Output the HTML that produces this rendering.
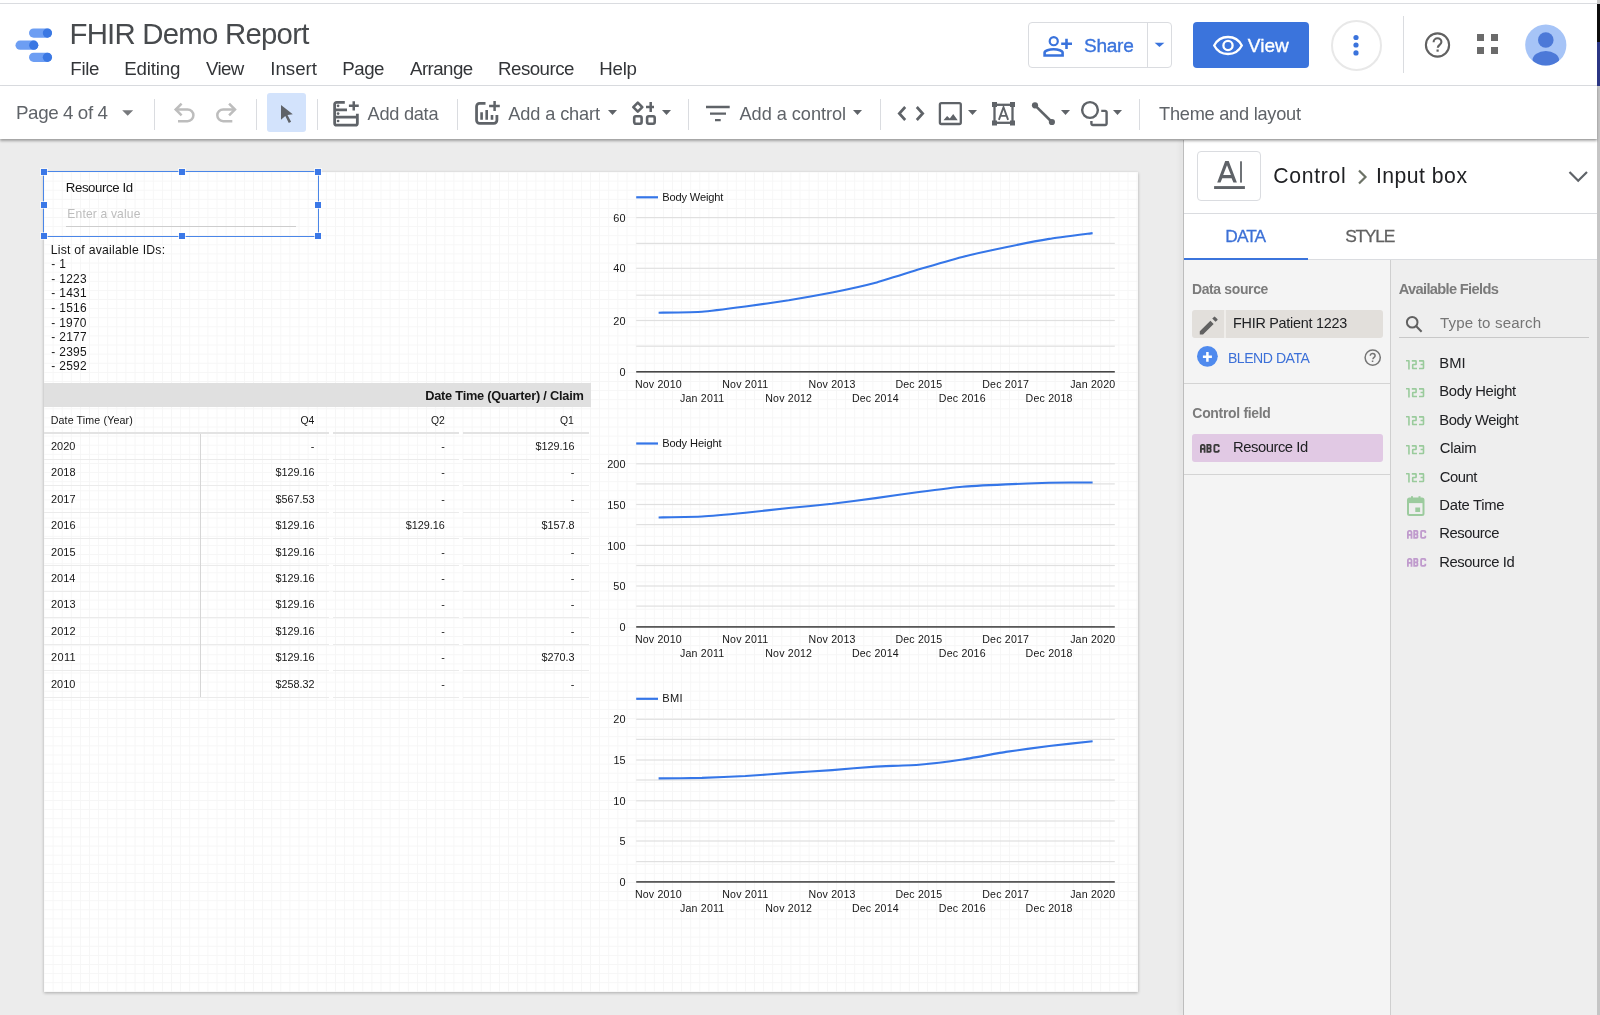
<!DOCTYPE html>
<html><head><meta charset="utf-8"><title>FHIR Demo Report</title>
<style>
html,body{margin:0;padding:0}
body{width:1600px;height:1015px;overflow:hidden;position:relative;background:#ececec;font-family:"Liberation Sans",sans-serif}
.t{position:absolute;line-height:1;white-space:nowrap;z-index:5}
</style></head><body>
<div style="position:absolute;left:0px;top:0px;width:1600px;height:86px;background:#fff;"></div>
<div style="position:absolute;left:0px;top:2.5px;width:1597px;height:1px;background:#dadce0;"></div>
<div style="position:absolute;left:0px;top:85px;width:1597px;height:1px;background:#dadce0;"></div>
<div style="position:absolute;left:1597px;top:0px;width:3px;height:4px;background:#c8c8c8;"></div>
<div style="position:absolute;left:1597px;top:4px;width:3px;height:38px;background:#0d0d0d;"></div>
<div style="position:absolute;left:1597px;top:42px;width:3px;height:44px;background:#2b3683;"></div>
<div style="position:absolute;left:1597px;top:86px;width:3px;height:929px;background:#c5c5c5;"></div>
<svg style="position:absolute;left:0;top:0" width="60" height="70">
<rect x="29" y="28.5" width="23" height="9.2" rx="4.6" fill="#6d9ef3"/><circle cx="47.4" cy="33.1" r="4.6" fill="#3b78e3"/>
<rect x="15.5" y="40.6" width="22.8" height="9.2" rx="4.6" fill="#6d9ef3"/><circle cx="33.7" cy="45.2" r="4.6" fill="#3b78e3"/>
<rect x="29" y="52.7" width="23" height="9.2" rx="4.6" fill="#6d9ef3"/><circle cx="47.4" cy="57.3" r="4.6" fill="#3b78e3"/>
</svg>
<div style="position:absolute;left:1028px;top:22px;width:142px;height:44px;border:1px solid #dadce0;border-radius:4px;background:#fff"></div>
<div style="position:absolute;left:1147px;top:23px;width:1px;height:44px;background:#dadce0;"></div>
<svg style="position:absolute;left:1040px;top:33px" width="36" height="26" viewBox="0 0 36 26">
<circle cx="13.75" cy="8.2" r="4.05" fill="none" stroke="#3a73dc" stroke-width="2.2"/>
<path d="M4.6 22.5V19.6C4.6 17.6 9.2 16.25 13.6 16.25S22.6 17.6 22.6 19.6V22.5Z" fill="none" stroke="#3a73dc" stroke-width="2.6" stroke-linejoin="miter"/>
<path d="M26.5 5.8v10.1M21.2 10.75h10.8" stroke="#3a73dc" stroke-width="2.6"/>
</svg>
<svg style="position:absolute;left:1150px;top:38px" width="20" height="14"><path d="M4.6 4.8h9.8l-4.9 4.3z" fill="#3a73dc"/></svg>
<div style="position:absolute;left:1193px;top:22px;width:116px;height:46px;border-radius:4px;background:#3b74dc"></div>
<svg style="position:absolute;left:1210px;top:30px" width="36" height="30" viewBox="0 0 36 30">
<path d="M18 7C11.5 7 6.5 11 4.2 15.5 6.5 20 11.5 24 18 24s11.5-4 13.8-8.5C29.5 11 24.5 7 18 7z" fill="none" stroke="#fff" stroke-width="2.3"/>
<circle cx="18" cy="15.5" r="4.6" fill="none" stroke="#fff" stroke-width="2.3"/>
</svg>
<div style="position:absolute;left:1330.5px;top:19.5px;width:47px;height:47px;border:2px solid #e8e8e8;border-radius:50%"></div>
<svg style="position:absolute;left:1346px;top:30px" width="20" height="30">
<circle cx="10" cy="7.5" r="2.6" fill="#3a73dc"/><circle cx="10" cy="15" r="2.6" fill="#3a73dc"/><circle cx="10" cy="22.9" r="2.6" fill="#3a73dc"/></svg>
<div style="position:absolute;left:1402.5px;top:16px;width:1px;height:57px;background:#dadce0;"></div>
<svg style="position:absolute;left:1420px;top:28px" width="36" height="36" viewBox="0 0 36 36">
<circle cx="17.5" cy="17" r="11.6" fill="none" stroke="#616161" stroke-width="2.1"/>
<path d="M13.6 14.2c0-2.3 1.8-3.9 3.9-3.9s3.9 1.6 3.9 3.7c0 2.8-3.6 2.9-3.6 5.8" fill="none" stroke="#616161" stroke-width="2.1"/>
<rect x="16.5" y="21.5" width="2.2" height="2.2" fill="#616161"/>
</svg>
<div style="position:absolute;left:1477px;top:33.6px;width:7.4px;height:7.4px;background:#6b6b6b;"></div>
<div style="position:absolute;left:1490.6px;top:33.6px;width:7.4px;height:7.4px;background:#6b6b6b;"></div>
<div style="position:absolute;left:1477px;top:46.5px;width:7.4px;height:7.4px;background:#6b6b6b;"></div>
<div style="position:absolute;left:1490.6px;top:46.5px;width:7.4px;height:7.4px;background:#6b6b6b;"></div>
<svg style="position:absolute;left:1520px;top:19px" width="52" height="52" viewBox="0 0 52 52">
<defs><clipPath id="av"><circle cx="25.8" cy="26" r="20.6"/></clipPath></defs>
<circle cx="25.8" cy="26" r="20.6" fill="#a6c4f7"/>
<g clip-path="url(#av)"><circle cx="25.8" cy="21" r="7.8" fill="#4c79d8"/><ellipse cx="25.8" cy="41" rx="13.3" ry="8.9" fill="#4c79d8"/></g>
</svg>
<div style="position:absolute;left:0;top:86px;width:1597px;height:53px;background:#fff;box-shadow:0 1.5px 2.5px rgba(0,0,0,0.33);z-index:2"></div>
<svg style="position:absolute;left:118px;top:105px;z-index:3" width="20" height="16"><path d="M4.2 5.2h11l-5.5 5.6z" fill="#77797c"/></svg>
<div style="position:absolute;left:154.0px;top:99px;width:1px;height:31px;background:#dadce0;z-index:3"></div>
<div style="position:absolute;left:256.0px;top:99px;width:1px;height:31px;background:#dadce0;z-index:3"></div>
<div style="position:absolute;left:316.7px;top:99px;width:1px;height:31px;background:#dadce0;z-index:3"></div>
<div style="position:absolute;left:457.0px;top:99px;width:1px;height:31px;background:#dadce0;z-index:3"></div>
<div style="position:absolute;left:688.2px;top:99px;width:1px;height:31px;background:#dadce0;z-index:3"></div>
<div style="position:absolute;left:879.7px;top:99px;width:1px;height:31px;background:#dadce0;z-index:3"></div>
<div style="position:absolute;left:1139.0px;top:99px;width:1px;height:31px;background:#dadce0;z-index:3"></div>
<svg style="position:absolute;left:170px;top:98px;z-index:3" width="70" height="30" viewBox="0 0 70 30">
<path d="M11.6 5.6L5.7 11.5l5.9 5.9" fill="none" stroke="#bdbdbd" stroke-width="2.5"/>
<path d="M5.7 11.5h11.85a5.85 5.85 0 0 1 0 11.7H8" fill="none" stroke="#bdbdbd" stroke-width="2.5"/>
<path d="M59.1 5.6L65 11.5l-5.9 5.9" fill="none" stroke="#bdbdbd" stroke-width="2.5"/>
<path d="M65 11.5H53.15a5.85 5.85 0 0 0 0 11.7h9.15" fill="none" stroke="#bdbdbd" stroke-width="2.5"/>
</svg>
<div style="position:absolute;left:267px;top:93px;width:39px;height:38.5px;background:#d3e3fc;border-radius:3px;z-index:3"></div>
<svg style="position:absolute;left:276px;top:100px;z-index:3" width="24" height="28" viewBox="0 0 24 28"><path d="M5 5l11.8 9.3-5.3.6 3.6 6.9-2.3 1.1-3.5-7-4.3 3.8z" fill="#5f6368"/></svg>
<svg style="position:absolute;left:330px;top:98px;z-index:3" width="32" height="30" viewBox="0 0 32 30">
<path d="M14.8 4.3H6.65a2 2 0 0 0-2 2v18.9a2 2 0 0 0 2 2h18.7a2 2 0 0 0 2-2V15.75" fill="none" stroke="#5f6368" stroke-width="2.8"/>
<path d="M4.65 11.9H17M4.65 19.2H27.35" fill="none" stroke="#5f6368" stroke-width="2.8"/>
<path d="M23.75 3.25v9.35M18.9 7.8h9.85" fill="none" stroke="#5f6368" stroke-width="2.5"/>
<circle cx="8.1" cy="7.8" r="1.35" fill="#5f6368"/><circle cx="8.1" cy="15.6" r="1.35" fill="#5f6368"/><circle cx="8.1" cy="23" r="1.35" fill="#5f6368"/>
</svg>
<svg style="position:absolute;left:472px;top:98px;z-index:3" width="32" height="30" viewBox="0 0 32 30">
<path d="M13.5 5.45H7.55a3 3 0 0 0-3 3V22.3a3 3 0 0 0 3 3H21.9a3 3 0 0 0 3-3V17" fill="none" stroke="#5f6368" stroke-width="2.76"/>
<path d="M9.6 14.2v7.6M14.7 12v9.8M20 17v4.8" stroke="#5f6368" stroke-width="2.6"/>
<path d="M22.6 2.9v10M17.1 7.9h10.7" stroke="#5f6368" stroke-width="2.5"/>
</svg>
<svg style="position:absolute;left:605.7px;top:107.7px;z-index:3" width="13" height="9"><path d="M2 2h9l-4.5 5z" fill="#5f6368"/></svg>
<svg style="position:absolute;left:630px;top:98px;z-index:3" width="30" height="30" viewBox="0 0 30 30">
<path d="M7.8 4.6L12.3 9.1 7.8 13.6 3.3 9.1z" fill="none" stroke="#5f6368" stroke-width="2.6" stroke-linejoin="round"/>
<path d="M20.7 4.1v10M16 9h8" stroke="#5f6368" stroke-width="2.5"/>
<rect x="4.2" y="18.3" width="7.4" height="7.4" rx="1.6" fill="none" stroke="#5f6368" stroke-width="2.6"/>
<rect x="17.1" y="18.3" width="7.6" height="7.4" rx="1.6" fill="none" stroke="#5f6368" stroke-width="2.6"/>
</svg>
<svg style="position:absolute;left:659.7px;top:107.7px;z-index:3" width="13" height="9"><path d="M2 2h9l-4.5 5z" fill="#5f6368"/></svg>
<svg style="position:absolute;left:700px;top:100px;z-index:3" width="34" height="26"><path d="M6 7h23.7M10 13.6h16M15 20.2h5.7" stroke="#5f6368" stroke-width="2.3"/></svg>
<svg style="position:absolute;left:851px;top:107.7px;z-index:3" width="13" height="9"><path d="M2 2h9l-4.5 5z" fill="#5f6368"/></svg>
<svg style="position:absolute;left:894px;top:100px;z-index:3" width="34" height="26"><path d="M11.2 7L5.3 13.5l5.9 6.5M22.8 7l5.9 6.5-5.9 6.5" fill="none" stroke="#5f6368" stroke-width="2.7"/></svg>
<svg style="position:absolute;left:935px;top:98px;z-index:3" width="32" height="32" viewBox="0 0 32 32">
<rect x="4.9" y="5.1" width="20.9" height="20.9" rx="1.5" fill="none" stroke="#5f6368" stroke-width="2.3"/>
<path d="M8.5 22.3l3.6-4.3 2.7 2.6 3.4-4.6 4.5 6.3z" fill="#5f6368"/>
</svg>
<svg style="position:absolute;left:965.7px;top:108px;z-index:3" width="13" height="9"><path d="M2 2h9l-4.5 5z" fill="#5f6368"/></svg>
<svg style="position:absolute;left:988px;top:98px;z-index:3" width="32" height="32" viewBox="0 0 32 32">
<rect x="6.5" y="6.8" width="18" height="18" fill="none" stroke="#5f6368" stroke-width="2.3"/>
<rect x="4" y="4" width="5" height="5" fill="#5f6368"/><rect x="22" y="4" width="5" height="5" fill="#5f6368"/>
<rect x="4" y="22.5" width="5" height="5" fill="#5f6368"/><rect x="22" y="22.5" width="5" height="5" fill="#5f6368"/>
<path d="M10.9 21.8l4.6-12.6 4.6 12.6M12.4 17.9h6.2" fill="none" stroke="#5f6368" stroke-width="1.9"/>
</svg>
<svg style="position:absolute;left:1028px;top:98px;z-index:3" width="32" height="32" viewBox="0 0 32 32">
<path d="M7 7.3L23.9 24" stroke="#5f6368" stroke-width="2.6"/>
<circle cx="7" cy="7.3" r="3.1" fill="#5f6368"/><circle cx="23.9" cy="24" r="3.1" fill="#5f6368"/>
</svg>
<svg style="position:absolute;left:1059px;top:108px;z-index:3" width="13" height="9"><path d="M2 2h9l-4.5 5z" fill="#5f6368"/></svg>
<svg style="position:absolute;left:1078px;top:97px;z-index:3" width="32" height="32" viewBox="0 0 32 32">
<circle cx="12" cy="13" r="7.85" fill="none" stroke="#5f6368" stroke-width="2.4"/>
<path d="M23.25 13.9H27.1a1.5 1.5 0 0 1 1.5 1.5V26.5a1.5 1.5 0 0 1-1.5 1.5H14.9a1.5 1.5 0 0 1-1.5-1.5V23.9" fill="none" stroke="#5f6368" stroke-width="2.4"/>
</svg>
<svg style="position:absolute;left:1110.7px;top:108px;z-index:3" width="13" height="9"><path d="M2 2h9l-4.5 5z" fill="#5f6368"/></svg>
<div style="position:absolute;left:44px;top:172px;width:1094px;height:820px;background-color:#fff;
background-image:linear-gradient(to right, #f6f6f6 1px, transparent 1px),linear-gradient(to bottom, #f6f6f6 1px, transparent 1px);
background-size:9.11667px 9.11667px;background-position:-0.5px -0.5px;box-shadow:0 1px 3px rgba(0,0,0,0.28)"></div>
<div style="position:absolute;left:66px;top:226.3px;width:229.8px;height:1.2px;background:#cdcdcd;"></div>
<div style="position:absolute;left:43px;top:171px;width:275.5px;height:66px;border:1px solid #4a86e8;box-sizing:border-box"></div>
<div style="position:absolute;left:40.6px;top:168.6px;width:6px;height:6px;background:#3b78e7;box-shadow:0 0 0 1px rgba(255,255,255,0.6)"></div>
<div style="position:absolute;left:40.6px;top:201.6px;width:6px;height:6px;background:#3b78e7;box-shadow:0 0 0 1px rgba(255,255,255,0.6)"></div>
<div style="position:absolute;left:40.6px;top:233.4px;width:6px;height:6px;background:#3b78e7;box-shadow:0 0 0 1px rgba(255,255,255,0.6)"></div>
<div style="position:absolute;left:178.5px;top:168.6px;width:6px;height:6px;background:#3b78e7;box-shadow:0 0 0 1px rgba(255,255,255,0.6)"></div>
<div style="position:absolute;left:178.5px;top:233.4px;width:6px;height:6px;background:#3b78e7;box-shadow:0 0 0 1px rgba(255,255,255,0.6)"></div>
<div style="position:absolute;left:315.1px;top:168.6px;width:6px;height:6px;background:#3b78e7;box-shadow:0 0 0 1px rgba(255,255,255,0.6)"></div>
<div style="position:absolute;left:315.1px;top:201.6px;width:6px;height:6px;background:#3b78e7;box-shadow:0 0 0 1px rgba(255,255,255,0.6)"></div>
<div style="position:absolute;left:315.1px;top:233.4px;width:6px;height:6px;background:#3b78e7;box-shadow:0 0 0 1px rgba(255,255,255,0.6)"></div>
<div style="position:absolute;left:44px;top:383px;width:546.6px;height:23.5px;background:#e0e0e0;"></div>
<div style="position:absolute;left:44px;top:432.4px;width:285px;height:1.3px;background:#e3e3e3;"></div>
<div style="position:absolute;left:333px;top:432.4px;width:126px;height:1.3px;background:#e3e3e3;"></div>
<div style="position:absolute;left:463px;top:432.4px;width:126px;height:1.3px;background:#e3e3e3;"></div>
<div style="position:absolute;left:44px;top:458.9px;width:285px;height:1px;background:#ebebeb;"></div>
<div style="position:absolute;left:333px;top:458.9px;width:126px;height:1px;background:#ebebeb;"></div>
<div style="position:absolute;left:463px;top:458.9px;width:126px;height:1px;background:#ebebeb;"></div>
<div style="position:absolute;left:44px;top:485.29999999999995px;width:285px;height:1px;background:#ebebeb;"></div>
<div style="position:absolute;left:333px;top:485.29999999999995px;width:126px;height:1px;background:#ebebeb;"></div>
<div style="position:absolute;left:463px;top:485.29999999999995px;width:126px;height:1px;background:#ebebeb;"></div>
<div style="position:absolute;left:44px;top:511.69999999999993px;width:285px;height:1px;background:#ebebeb;"></div>
<div style="position:absolute;left:333px;top:511.69999999999993px;width:126px;height:1px;background:#ebebeb;"></div>
<div style="position:absolute;left:463px;top:511.69999999999993px;width:126px;height:1px;background:#ebebeb;"></div>
<div style="position:absolute;left:44px;top:538.0999999999999px;width:285px;height:1px;background:#ebebeb;"></div>
<div style="position:absolute;left:333px;top:538.0999999999999px;width:126px;height:1px;background:#ebebeb;"></div>
<div style="position:absolute;left:463px;top:538.0999999999999px;width:126px;height:1px;background:#ebebeb;"></div>
<div style="position:absolute;left:44px;top:564.5px;width:285px;height:1px;background:#ebebeb;"></div>
<div style="position:absolute;left:333px;top:564.5px;width:126px;height:1px;background:#ebebeb;"></div>
<div style="position:absolute;left:463px;top:564.5px;width:126px;height:1px;background:#ebebeb;"></div>
<div style="position:absolute;left:44px;top:590.9px;width:285px;height:1px;background:#ebebeb;"></div>
<div style="position:absolute;left:333px;top:590.9px;width:126px;height:1px;background:#ebebeb;"></div>
<div style="position:absolute;left:463px;top:590.9px;width:126px;height:1px;background:#ebebeb;"></div>
<div style="position:absolute;left:44px;top:617.3px;width:285px;height:1px;background:#ebebeb;"></div>
<div style="position:absolute;left:333px;top:617.3px;width:126px;height:1px;background:#ebebeb;"></div>
<div style="position:absolute;left:463px;top:617.3px;width:126px;height:1px;background:#ebebeb;"></div>
<div style="position:absolute;left:44px;top:643.6999999999999px;width:285px;height:1px;background:#ebebeb;"></div>
<div style="position:absolute;left:333px;top:643.6999999999999px;width:126px;height:1px;background:#ebebeb;"></div>
<div style="position:absolute;left:463px;top:643.6999999999999px;width:126px;height:1px;background:#ebebeb;"></div>
<div style="position:absolute;left:44px;top:670.0999999999999px;width:285px;height:1px;background:#ebebeb;"></div>
<div style="position:absolute;left:333px;top:670.0999999999999px;width:126px;height:1px;background:#ebebeb;"></div>
<div style="position:absolute;left:463px;top:670.0999999999999px;width:126px;height:1px;background:#ebebeb;"></div>
<div style="position:absolute;left:44px;top:696.5px;width:285px;height:1px;background:#ebebeb;"></div>
<div style="position:absolute;left:333px;top:696.5px;width:126px;height:1px;background:#ebebeb;"></div>
<div style="position:absolute;left:463px;top:696.5px;width:126px;height:1px;background:#ebebeb;"></div>
<div style="position:absolute;left:199.8px;top:433.5px;width:1.1px;height:263.5px;background:#d6d6d6;"></div>
<svg style="position:absolute;left:0;top:0" width="1600" height="1015">
<rect x="636.2" y="217.00" width="478.6" height="1.2" fill="#e0e0e0"/>
<rect x="636.2" y="242.80" width="478.6" height="1.2" fill="#e0e0e0"/>
<rect x="636.2" y="267.70" width="478.6" height="1.2" fill="#e0e0e0"/>
<rect x="636.2" y="294.60" width="478.6" height="1.2" fill="#e0e0e0"/>
<rect x="636.2" y="319.90" width="478.6" height="1.2" fill="#e0e0e0"/>
<rect x="636.2" y="345.60" width="478.6" height="1.2" fill="#e0e0e0"/>
<rect x="636.2" y="371.00" width="478.6" height="1.6" fill="#474747"/>
<rect x="636.2" y="196.20" width="21.8" height="2.2" fill="#3576e8"/>
<path d="M658.60 312.70 C661.20 312.64 696.79 312.07 702.00 311.70 C707.21 311.33 740.19 307.18 745.40 306.50 C750.61 305.82 783.59 301.14 788.80 300.30 C794.01 299.46 826.99 293.56 832.20 292.50 C837.41 291.44 870.39 284.09 875.60 282.70 C880.81 281.31 913.79 270.85 919.00 269.30 C924.21 267.75 957.19 258.23 962.40 256.90 C967.61 255.57 1000.59 248.28 1005.80 247.20 C1011.01 246.12 1043.99 239.75 1049.20 238.90 C1054.41 238.05 1090.00 233.45 1092.60 233.10" fill="none" stroke="#3576e8" stroke-width="2.1" stroke-linejoin="round"/>
<rect x="636.2" y="463.20" width="478.6" height="1.2" fill="#e0e0e0"/>
<rect x="636.2" y="483.30" width="478.6" height="1.2" fill="#e0e0e0"/>
<rect x="636.2" y="503.90" width="478.6" height="1.2" fill="#e0e0e0"/>
<rect x="636.2" y="524.00" width="478.6" height="1.2" fill="#e0e0e0"/>
<rect x="636.2" y="544.80" width="478.6" height="1.2" fill="#e0e0e0"/>
<rect x="636.2" y="564.90" width="478.6" height="1.2" fill="#e0e0e0"/>
<rect x="636.2" y="585.40" width="478.6" height="1.2" fill="#e0e0e0"/>
<rect x="636.2" y="605.50" width="478.6" height="1.2" fill="#e0e0e0"/>
<rect x="636.2" y="626.10" width="478.6" height="1.6" fill="#474747"/>
<rect x="636.2" y="442.40" width="21.8" height="2.2" fill="#3576e8"/>
<path d="M658.60 517.50 C661.20 517.44 696.79 516.79 702.00 516.50 C707.21 516.21 740.19 513.21 745.40 512.70 C750.61 512.19 783.59 508.53 788.80 508.00 C794.01 507.47 826.99 504.39 832.20 503.80 C837.41 503.21 870.39 498.81 875.60 498.10 C880.81 497.39 913.79 492.68 919.00 492.00 C924.21 491.32 957.19 487.16 962.40 486.70 C967.61 486.24 1000.59 484.64 1005.80 484.40 C1011.01 484.16 1043.99 482.81 1049.20 482.70 C1054.41 482.59 1090.00 482.51 1092.60 482.50" fill="none" stroke="#3576e8" stroke-width="2.1" stroke-linejoin="round"/>
<rect x="636.2" y="718.70" width="478.6" height="1.2" fill="#e0e0e0"/>
<rect x="636.2" y="738.80" width="478.6" height="1.2" fill="#e0e0e0"/>
<rect x="636.2" y="759.40" width="478.6" height="1.2" fill="#e0e0e0"/>
<rect x="636.2" y="779.40" width="478.6" height="1.2" fill="#e0e0e0"/>
<rect x="636.2" y="800.20" width="478.6" height="1.2" fill="#e0e0e0"/>
<rect x="636.2" y="820.40" width="478.6" height="1.2" fill="#e0e0e0"/>
<rect x="636.2" y="840.40" width="478.6" height="1.2" fill="#e0e0e0"/>
<rect x="636.2" y="861.00" width="478.6" height="1.2" fill="#e0e0e0"/>
<rect x="636.2" y="881.10" width="478.6" height="1.6" fill="#474747"/>
<rect x="636.2" y="697.70" width="21.8" height="2.2" fill="#3576e8"/>
<path d="M658.60 778.40 C661.20 778.37 696.79 778.04 702.00 777.90 C707.21 777.76 740.19 776.30 745.40 776.00 C750.61 775.70 783.59 773.25 788.80 772.90 C794.01 772.55 826.99 770.48 832.20 770.10 C837.41 769.72 870.39 766.92 875.60 766.60 C880.81 766.28 913.79 765.13 919.00 764.70 C924.21 764.27 957.19 760.27 962.40 759.50 C967.61 758.73 1000.59 752.71 1005.80 751.90 C1011.01 751.09 1043.99 746.64 1049.20 746.00 C1054.41 745.36 1090.00 741.58 1092.60 741.30" fill="none" stroke="#3576e8" stroke-width="2.1" stroke-linejoin="round"/>
</svg>
<div style="position:absolute;left:1183px;top:140px;width:1px;height:875px;background:#bdbdbd;box-shadow:-2px 0 5px rgba(0,0,0,0.16)"></div>
<div style="position:absolute;left:1184px;top:140px;width:413px;height:120px;background:#fff;"></div>
<div style="position:absolute;left:1184px;top:260px;width:206px;height:755px;background:#f4f4f4;"></div>
<div style="position:absolute;left:1391px;top:260px;width:206px;height:755px;background:#eeeeee;"></div>
<div style="position:absolute;left:1390px;top:260px;width:1px;height:755px;background:#cfcfcf;"></div>
<div style="position:absolute;left:1184px;top:213px;width:413px;height:1px;background:#dadce0;"></div>
<div style="position:absolute;left:1184px;top:259.3px;width:413px;height:1px;background:#dadce0;"></div>
<div style="position:absolute;left:1184px;top:257.6px;width:124px;height:2.8px;background:#3b74dc;"></div>
<div style="position:absolute;left:1197px;top:151px;width:62px;height:48px;border:1px solid #dadce0;border-radius:4px;background:#fff"></div>
<svg style="position:absolute;left:1205px;top:155px" width="50" height="40" viewBox="0 0 50 40">
<path fill-rule="evenodd" d="M12.2 27.6L20.2 6.1h3.5l8.2 21.5h-3.5l-1.8-4.4h-9.3l-1.8 4.4zM18.2 20h7.7L22 10.3z" fill="#5f6368"/>
<rect x="35" y="6.3" width="2" height="21.3" fill="#6f7377"/>
<rect x="9.1" y="31.1" width="30.8" height="2.9" fill="#5f6368"/>
</svg>
<svg style="position:absolute;left:1354px;top:166px" width="18" height="22"><path d="M5 4.5l6.5 6.5L5 17.5" fill="none" stroke="#6c7266" stroke-width="2.2"/></svg>
<svg style="position:absolute;left:1565px;top:166px" width="26" height="20"><path d="M4.5 6l8.7 8.7L22 6" fill="none" stroke="#5f6368" stroke-width="2.2"/></svg>
<div style="position:absolute;left:1192px;top:310px;width:191px;height:28px;background:#e2dfdb;border-radius:3px"></div>
<div style="position:absolute;left:1223.8px;top:310px;width:1.9px;height:28px;background:#efedea;"></div>
<svg style="position:absolute;left:1195.5px;top:311.5px" width="26" height="26" viewBox="0 0 24 24"><path d="M3.5 17.8v3h3l9.8-9.8-3-3zM19.7 7.6a.8.8 0 0 0 0-1.1l-2-2a.8.8 0 0 0-1.1 0l-1.6 1.6 3 3z" fill="#616161"/></svg>
<svg style="position:absolute;left:1195px;top:344px" width="26" height="26"><circle cx="12.4" cy="12.3" r="10.4" fill="#4f8aee"/><path d="M12.4 8v9.7M7.9 12.8h9" stroke="#fff" stroke-width="2.5"/></svg>
<svg style="position:absolute;left:1362px;top:347px" width="22" height="22" viewBox="0 0 22 22">
<circle cx="10.7" cy="10.6" r="7.6" fill="none" stroke="#757575" stroke-width="1.5"/>
<path d="M8.3 8.8c0-1.4 1.1-2.4 2.4-2.4s2.4 1 2.4 2.3c0 1.7-2.2 1.8-2.2 3.6" fill="none" stroke="#757575" stroke-width="1.5"/>
<rect x="9.8" y="13.5" width="1.5" height="1.5" fill="#757575"/></svg>
<div style="position:absolute;left:1184px;top:383.2px;width:206px;height:1.2px;background:#d4d4d4;"></div>
<div style="position:absolute;left:1192px;top:434.3px;width:191px;height:27.6px;background:#e1c9e4;border-radius:3px"></div>
<svg style="position:absolute;left:1198.70px;top:442.90px" width="22" height="12" viewBox="-1 -1 22 12">
<g fill="none" stroke="#3a3a3a" stroke-width="1.8" stroke-linejoin="round" transform="scale(1.02,1)">
<path d="M0.9 8.8V2.2a1.3 1.3 0 0 1 1.3-1.3h1a1.3 1.3 0 0 1 1.3 1.3V8.8M0.9 4.9H4.5"/>
<path d="M7.2 0V8.8M7.2 0.9H9.8a.6.6 0 0 1 .6.6V3.8a.6.6 0 0 1-.6.6H7.2M7.2 4.4H9.8a.6.6 0 0 1 .6.6V7.3a.6.6 0 0 1-.6.6H7.2"/>
<path d="M18.3 3.1V1.7a.8.8 0 0 0-.8-.8H14.9a.8.8 0 0 0-.8.8V7.1a.8.8 0 0 0 .8.8H17.5a.8.8 0 0 0 .8-.8V5.8"/>
</g></svg>
<div style="position:absolute;left:1184px;top:473.8px;width:206px;height:1.2px;background:#d4d4d4;"></div>
<svg style="position:absolute;left:1402px;top:312px" width="24" height="24" viewBox="0 0 24 24"><circle cx="10.2" cy="10.3" r="5.3" fill="none" stroke="#616161" stroke-width="2"/><path d="M14 14.1l5.6 5.6" stroke="#616161" stroke-width="2.1"/></svg>
<div style="position:absolute;left:1398.9px;top:337.1px;width:190.6px;height:1px;background:#c8c8c8;"></div>
<svg style="position:absolute;left:1405.00px;top:358.60px" width="22" height="12" viewBox="-1 -1 22 12">
<g fill="none" stroke="#9acb9c" stroke-width="1.6" stroke-linejoin="round">
<path d="M0 0.8H2.95V9.4"/>
<path d="M5.8 0.9H9.6a.5.5 0 0 1 .5.5V4a.5.5 0 0 1-.5.5H7.2a.5.5 0 0 0-.5.5V8.5H11"/>
<path d="M13 0.9H17a.5.5 0 0 1 .5.5V8a.5.5 0 0 1-.5.5H13M14.6 4.5H17.5"/>
</g></svg>
<svg style="position:absolute;left:1405.00px;top:387.00px" width="22" height="12" viewBox="-1 -1 22 12">
<g fill="none" stroke="#9acb9c" stroke-width="1.6" stroke-linejoin="round">
<path d="M0 0.8H2.95V9.4"/>
<path d="M5.8 0.9H9.6a.5.5 0 0 1 .5.5V4a.5.5 0 0 1-.5.5H7.2a.5.5 0 0 0-.5.5V8.5H11"/>
<path d="M13 0.9H17a.5.5 0 0 1 .5.5V8a.5.5 0 0 1-.5.5H13M14.6 4.5H17.5"/>
</g></svg>
<svg style="position:absolute;left:1405.00px;top:415.40px" width="22" height="12" viewBox="-1 -1 22 12">
<g fill="none" stroke="#9acb9c" stroke-width="1.6" stroke-linejoin="round">
<path d="M0 0.8H2.95V9.4"/>
<path d="M5.8 0.9H9.6a.5.5 0 0 1 .5.5V4a.5.5 0 0 1-.5.5H7.2a.5.5 0 0 0-.5.5V8.5H11"/>
<path d="M13 0.9H17a.5.5 0 0 1 .5.5V8a.5.5 0 0 1-.5.5H13M14.6 4.5H17.5"/>
</g></svg>
<svg style="position:absolute;left:1405.00px;top:443.80px" width="22" height="12" viewBox="-1 -1 22 12">
<g fill="none" stroke="#9acb9c" stroke-width="1.6" stroke-linejoin="round">
<path d="M0 0.8H2.95V9.4"/>
<path d="M5.8 0.9H9.6a.5.5 0 0 1 .5.5V4a.5.5 0 0 1-.5.5H7.2a.5.5 0 0 0-.5.5V8.5H11"/>
<path d="M13 0.9H17a.5.5 0 0 1 .5.5V8a.5.5 0 0 1-.5.5H13M14.6 4.5H17.5"/>
</g></svg>
<svg style="position:absolute;left:1405.00px;top:472.20px" width="22" height="12" viewBox="-1 -1 22 12">
<g fill="none" stroke="#9acb9c" stroke-width="1.6" stroke-linejoin="round">
<path d="M0 0.8H2.95V9.4"/>
<path d="M5.8 0.9H9.6a.5.5 0 0 1 .5.5V4a.5.5 0 0 1-.5.5H7.2a.5.5 0 0 0-.5.5V8.5H11"/>
<path d="M13 0.9H17a.5.5 0 0 1 .5.5V8a.5.5 0 0 1-.5.5H13M14.6 4.5H17.5"/>
</g></svg>
<svg style="position:absolute;left:1404px;top:495.2px" width="22" height="22" viewBox="0 0 22 22">
<rect x="4" y="3.5" width="15.5" height="16.5" rx="1.5" fill="none" stroke="#9ccb9e" stroke-width="2"/>
<rect x="4" y="3.5" width="15.5" height="4.6" fill="#9ccb9e"/>
<rect x="7" y="1.2" width="2" height="3" fill="#9ccb9e"/><rect x="14.5" y="1.2" width="2" height="3" fill="#9ccb9e"/>
<rect x="11.3" y="12.5" width="4.8" height="4.5" fill="#9ccb9e"/></svg>
<svg style="position:absolute;left:1405.60px;top:528.90px" width="22" height="12" viewBox="-1 -1 22 12">
<g fill="none" stroke="#c09bcd" stroke-width="1.8" stroke-linejoin="round" transform="scale(1.0,1)">
<path d="M0.9 8.8V2.2a1.3 1.3 0 0 1 1.3-1.3h1a1.3 1.3 0 0 1 1.3 1.3V8.8M0.9 4.9H4.5"/>
<path d="M7.2 0V8.8M7.2 0.9H9.8a.6.6 0 0 1 .6.6V3.8a.6.6 0 0 1-.6.6H7.2M7.2 4.4H9.8a.6.6 0 0 1 .6.6V7.3a.6.6 0 0 1-.6.6H7.2"/>
<path d="M18.3 3.1V1.7a.8.8 0 0 0-.8-.8H14.9a.8.8 0 0 0-.8.8V7.1a.8.8 0 0 0 .8.8H17.5a.8.8 0 0 0 .8-.8V5.8"/>
</g></svg>
<svg style="position:absolute;left:1405.60px;top:557.30px" width="22" height="12" viewBox="-1 -1 22 12">
<g fill="none" stroke="#c09bcd" stroke-width="1.8" stroke-linejoin="round" transform="scale(1.0,1)">
<path d="M0.9 8.8V2.2a1.3 1.3 0 0 1 1.3-1.3h1a1.3 1.3 0 0 1 1.3 1.3V8.8M0.9 4.9H4.5"/>
<path d="M7.2 0V8.8M7.2 0.9H9.8a.6.6 0 0 1 .6.6V3.8a.6.6 0 0 1-.6.6H7.2M7.2 4.4H9.8a.6.6 0 0 1 .6.6V7.3a.6.6 0 0 1-.6.6H7.2"/>
<path d="M18.3 3.1V1.7a.8.8 0 0 0-.8-.8H14.9a.8.8 0 0 0-.8.8V7.1a.8.8 0 0 0 .8.8H17.5a.8.8 0 0 0 .8-.8V5.8"/>
</g></svg>
<div style="position:absolute;left:0;top:0;width:1600px;height:1015px;z-index:5;will-change:transform">
<div class="t" style="left:69.51px;top:19px;font-size:29.37px;letter-spacing:-0.763px;color:#474a4d;font-weight:normal;font-family:'Liberation Sans';">FHIR Demo Report</div>
<div class="t" style="left:70.29px;top:60px;font-size:18.7px;letter-spacing:-0.304px;color:#333538;font-weight:normal;font-family:'Liberation Sans';">File</div>
<div class="t" style="left:124.29px;top:60px;font-size:18.7px;letter-spacing:-0.153px;color:#333538;font-weight:normal;font-family:'Liberation Sans';">Editing</div>
<div class="t" style="left:206.00px;top:60px;font-size:18.7px;letter-spacing:-0.641px;color:#333538;font-weight:normal;font-family:'Liberation Sans';">View</div>
<div class="t" style="left:270.29px;top:60px;font-size:18.7px;letter-spacing:-0.024px;color:#333538;font-weight:normal;font-family:'Liberation Sans';">Insert</div>
<div class="t" style="left:342.29px;top:60px;font-size:18.7px;letter-spacing:-0.485px;color:#333538;font-weight:normal;font-family:'Liberation Sans';">Page</div>
<div class="t" style="left:410.00px;top:60px;font-size:18.7px;letter-spacing:-0.545px;color:#333538;font-weight:normal;font-family:'Liberation Sans';">Arrange</div>
<div class="t" style="left:498.04px;top:60px;font-size:18.7px;letter-spacing:-0.509px;color:#333538;font-weight:normal;font-family:'Liberation Sans';">Resource</div>
<div class="t" style="left:599.29px;top:60px;font-size:18.7px;letter-spacing:-0.247px;color:#333538;font-weight:normal;font-family:'Liberation Sans';">Help</div>
<div class="t" style="left:1084.10px;top:36px;font-size:19.06px;letter-spacing:-0.298px;color:#3a73dc;font-weight:normal;font-family:'Liberation Sans';-webkit-text-stroke:0.35px #3a73dc;">Share</div>
<div class="t" style="left:1247.80px;top:36px;font-size:19.06px;letter-spacing:-0.000px;color:#ffffff;font-weight:normal;font-family:'Liberation Sans';-webkit-text-stroke:0.35px #fff;">View</div>
<div class="t" style="left:16.03px;top:104px;font-size:18.77px;letter-spacing:-0.408px;color:#5f6368;font-weight:normal;font-family:'Liberation Sans';">Page 4 of 4</div>
<div class="t" style="left:367.50px;top:105px;font-size:18.2px;letter-spacing:-0.254px;color:#5f6368;font-weight:normal;font-family:'Liberation Sans';">Add data</div>
<div class="t" style="left:508.30px;top:105px;font-size:18.2px;letter-spacing:-0.124px;color:#5f6368;font-weight:normal;font-family:'Liberation Sans';">Add a chart</div>
<div class="t" style="left:739.50px;top:105px;font-size:18.2px;letter-spacing:-0.045px;color:#5f6368;font-weight:normal;font-family:'Liberation Sans';">Add a control</div>
<div class="t" style="left:1159.02px;top:105px;font-size:18.2px;letter-spacing:-0.238px;color:#5f6368;font-weight:normal;font-family:'Liberation Sans';">Theme and layout</div>
<div class="t" style="left:65.77px;top:181px;font-size:13.23px;letter-spacing:-0.385px;color:#161616;font-weight:normal;font-family:'Liberation Sans';">Resource Id</div>
<div class="t" style="left:67.36px;top:208px;font-size:12.09px;letter-spacing:0.158px;color:#bdbdbd;font-weight:normal;font-family:'Liberation Sans';">Enter a value</div>
<div class="t" style="left:50.74px;top:244px;font-size:12.23px;letter-spacing:0.239px;color:#161616;font-weight:normal;font-family:'Liberation Sans';">List of available IDs:</div>
<div class="t" style="left:51.33px;top:259px;font-size:11.95px;letter-spacing:0.350px;color:#161616;font-weight:normal;font-family:'Liberation Sans';">- 1</div>
<div class="t" style="left:51.33px;top:274px;font-size:11.95px;letter-spacing:0.295px;color:#161616;font-weight:normal;font-family:'Liberation Sans';">- 1223</div>
<div class="t" style="left:51.33px;top:288px;font-size:11.95px;letter-spacing:0.295px;color:#161616;font-weight:normal;font-family:'Liberation Sans';">- 1431</div>
<div class="t" style="left:51.33px;top:303px;font-size:11.95px;letter-spacing:0.295px;color:#161616;font-weight:normal;font-family:'Liberation Sans';">- 1516</div>
<div class="t" style="left:51.33px;top:318px;font-size:11.95px;letter-spacing:0.257px;color:#161616;font-weight:normal;font-family:'Liberation Sans';">- 1970</div>
<div class="t" style="left:51.33px;top:332px;font-size:11.95px;letter-spacing:0.295px;color:#161616;font-weight:normal;font-family:'Liberation Sans';">- 2177</div>
<div class="t" style="left:51.33px;top:347px;font-size:11.95px;letter-spacing:0.295px;color:#161616;font-weight:normal;font-family:'Liberation Sans';">- 2395</div>
<div class="t" style="left:51.33px;top:361px;font-size:11.95px;letter-spacing:0.295px;color:#161616;font-weight:normal;font-family:'Liberation Sans';">- 2592</div>
<div class="t" style="left:425.20px;top:390px;font-size:12.8px;letter-spacing:-0.235px;color:#161616;font-weight:bold;font-family:'Liberation Sans';">Date Time (Quarter) / Claim</div>
<div class="t" style="left:50.67px;top:415px;font-size:10.67px;letter-spacing:0.129px;color:#161616;font-weight:normal;font-family:'Liberation Sans';">Date Time (Year)</div>
<div class="t" style="left:300.41px;top:416px;font-size:10.38px;letter-spacing:0.000px;color:#161616;font-weight:normal;font-family:'Liberation Sans';">Q4</div>
<div class="t" style="left:430.97px;top:416px;font-size:10.38px;letter-spacing:0.000px;color:#161616;font-weight:normal;font-family:'Liberation Sans';">Q2</div>
<div class="t" style="left:559.97px;top:416px;font-size:10.38px;letter-spacing:0.000px;color:#161616;font-weight:normal;font-family:'Liberation Sans';">Q1</div>
<div class="t" style="left:50.99px;top:441px;font-size:10.95px;letter-spacing:0.042px;color:#161616;font-weight:normal;font-family:'Liberation Sans';">2020</div>
<div class="t" style="left:310.79px;top:441px;font-size:10.8px;letter-spacing:0.000px;color:#161616;font-weight:normal;font-family:'Liberation Sans';">-</div>
<div class="t" style="left:441.19px;top:441px;font-size:10.8px;letter-spacing:0.000px;color:#161616;font-weight:normal;font-family:'Liberation Sans';">-</div>
<div class="t" style="left:535.40px;top:441px;font-size:10.8px;letter-spacing:0.000px;color:#161616;font-weight:normal;font-family:'Liberation Sans';">$129.16</div>
<div class="t" style="left:50.99px;top:467px;font-size:10.95px;letter-spacing:0.099px;color:#161616;font-weight:normal;font-family:'Liberation Sans';">2018</div>
<div class="t" style="left:275.40px;top:467px;font-size:10.8px;letter-spacing:0.000px;color:#161616;font-weight:normal;font-family:'Liberation Sans';">$129.16</div>
<div class="t" style="left:441.19px;top:467px;font-size:10.8px;letter-spacing:0.000px;color:#161616;font-weight:normal;font-family:'Liberation Sans';">-</div>
<div class="t" style="left:570.79px;top:467px;font-size:10.8px;letter-spacing:0.000px;color:#161616;font-weight:normal;font-family:'Liberation Sans';">-</div>
<div class="t" style="left:50.99px;top:494px;font-size:10.95px;letter-spacing:0.099px;color:#161616;font-weight:normal;font-family:'Liberation Sans';">2017</div>
<div class="t" style="left:275.40px;top:494px;font-size:10.8px;letter-spacing:0.000px;color:#161616;font-weight:normal;font-family:'Liberation Sans';">$567.53</div>
<div class="t" style="left:441.19px;top:494px;font-size:10.8px;letter-spacing:0.000px;color:#161616;font-weight:normal;font-family:'Liberation Sans';">-</div>
<div class="t" style="left:570.79px;top:494px;font-size:10.8px;letter-spacing:0.000px;color:#161616;font-weight:normal;font-family:'Liberation Sans';">-</div>
<div class="t" style="left:50.99px;top:520px;font-size:10.95px;letter-spacing:0.099px;color:#161616;font-weight:normal;font-family:'Liberation Sans';">2016</div>
<div class="t" style="left:275.40px;top:520px;font-size:10.8px;letter-spacing:0.000px;color:#161616;font-weight:normal;font-family:'Liberation Sans';">$129.16</div>
<div class="t" style="left:405.80px;top:520px;font-size:10.8px;letter-spacing:0.000px;color:#161616;font-weight:normal;font-family:'Liberation Sans';">$129.16</div>
<div class="t" style="left:541.40px;top:520px;font-size:10.8px;letter-spacing:0.000px;color:#161616;font-weight:normal;font-family:'Liberation Sans';">$157.8</div>
<div class="t" style="left:50.99px;top:547px;font-size:10.95px;letter-spacing:0.099px;color:#161616;font-weight:normal;font-family:'Liberation Sans';">2015</div>
<div class="t" style="left:275.40px;top:547px;font-size:10.8px;letter-spacing:0.000px;color:#161616;font-weight:normal;font-family:'Liberation Sans';">$129.16</div>
<div class="t" style="left:441.19px;top:547px;font-size:10.8px;letter-spacing:0.000px;color:#161616;font-weight:normal;font-family:'Liberation Sans';">-</div>
<div class="t" style="left:570.79px;top:547px;font-size:10.8px;letter-spacing:0.000px;color:#161616;font-weight:normal;font-family:'Liberation Sans';">-</div>
<div class="t" style="left:50.99px;top:573px;font-size:10.95px;letter-spacing:0.042px;color:#161616;font-weight:normal;font-family:'Liberation Sans';">2014</div>
<div class="t" style="left:275.40px;top:573px;font-size:10.8px;letter-spacing:0.000px;color:#161616;font-weight:normal;font-family:'Liberation Sans';">$129.16</div>
<div class="t" style="left:441.19px;top:573px;font-size:10.8px;letter-spacing:0.000px;color:#161616;font-weight:normal;font-family:'Liberation Sans';">-</div>
<div class="t" style="left:570.79px;top:573px;font-size:10.8px;letter-spacing:0.000px;color:#161616;font-weight:normal;font-family:'Liberation Sans';">-</div>
<div class="t" style="left:50.99px;top:599px;font-size:10.95px;letter-spacing:0.099px;color:#161616;font-weight:normal;font-family:'Liberation Sans';">2013</div>
<div class="t" style="left:275.40px;top:599px;font-size:10.8px;letter-spacing:0.000px;color:#161616;font-weight:normal;font-family:'Liberation Sans';">$129.16</div>
<div class="t" style="left:441.19px;top:599px;font-size:10.8px;letter-spacing:0.000px;color:#161616;font-weight:normal;font-family:'Liberation Sans';">-</div>
<div class="t" style="left:570.79px;top:599px;font-size:10.8px;letter-spacing:0.000px;color:#161616;font-weight:normal;font-family:'Liberation Sans';">-</div>
<div class="t" style="left:50.99px;top:626px;font-size:10.95px;letter-spacing:0.099px;color:#161616;font-weight:normal;font-family:'Liberation Sans';">2012</div>
<div class="t" style="left:275.40px;top:626px;font-size:10.8px;letter-spacing:0.000px;color:#161616;font-weight:normal;font-family:'Liberation Sans';">$129.16</div>
<div class="t" style="left:441.19px;top:626px;font-size:10.8px;letter-spacing:0.000px;color:#161616;font-weight:normal;font-family:'Liberation Sans';">-</div>
<div class="t" style="left:570.79px;top:626px;font-size:10.8px;letter-spacing:0.000px;color:#161616;font-weight:normal;font-family:'Liberation Sans';">-</div>
<div class="t" style="left:50.99px;top:652px;font-size:10.95px;letter-spacing:0.370px;color:#161616;font-weight:normal;font-family:'Liberation Sans';">2011</div>
<div class="t" style="left:275.40px;top:652px;font-size:10.8px;letter-spacing:0.000px;color:#161616;font-weight:normal;font-family:'Liberation Sans';">$129.16</div>
<div class="t" style="left:441.19px;top:652px;font-size:10.8px;letter-spacing:0.000px;color:#161616;font-weight:normal;font-family:'Liberation Sans';">-</div>
<div class="t" style="left:541.40px;top:652px;font-size:10.8px;letter-spacing:0.000px;color:#161616;font-weight:normal;font-family:'Liberation Sans';">$270.3</div>
<div class="t" style="left:50.99px;top:679px;font-size:10.95px;letter-spacing:0.042px;color:#161616;font-weight:normal;font-family:'Liberation Sans';">2010</div>
<div class="t" style="left:275.40px;top:679px;font-size:10.8px;letter-spacing:0.000px;color:#161616;font-weight:normal;font-family:'Liberation Sans';">$258.32</div>
<div class="t" style="left:441.19px;top:679px;font-size:10.8px;letter-spacing:0.000px;color:#161616;font-weight:normal;font-family:'Liberation Sans';">-</div>
<div class="t" style="left:570.79px;top:679px;font-size:10.8px;letter-spacing:0.000px;color:#161616;font-weight:normal;font-family:'Liberation Sans';">-</div>
<div class="t" style="left:662.13px;top:192px;font-size:11.09px;letter-spacing:-0.135px;color:#161616;font-weight:normal;font-family:'Liberation Sans';">Body Weight</div>
<div class="t" style="left:613.35px;top:213px;font-size:10.9px;letter-spacing:0.000px;color:#161616;font-weight:normal;font-family:'Liberation Sans';">60</div>
<div class="t" style="left:613.35px;top:263px;font-size:10.9px;letter-spacing:0.000px;color:#161616;font-weight:normal;font-family:'Liberation Sans';">40</div>
<div class="t" style="left:613.35px;top:316px;font-size:10.9px;letter-spacing:0.000px;color:#161616;font-weight:normal;font-family:'Liberation Sans';">20</div>
<div class="t" style="left:619.41px;top:367px;font-size:10.9px;letter-spacing:0.000px;color:#161616;font-weight:normal;font-family:'Liberation Sans';">0</div>
<div class="t" style="left:634.93px;top:379px;font-size:10.6px;letter-spacing:0.200px;color:#161616;font-weight:normal;font-family:'Liberation Sans';">Nov 2010</div>
<div class="t" style="left:680.02px;top:393px;font-size:10.6px;letter-spacing:0.200px;color:#161616;font-weight:normal;font-family:'Liberation Sans';">Jan 2011</div>
<div class="t" style="left:722.21px;top:379px;font-size:10.6px;letter-spacing:0.200px;color:#161616;font-weight:normal;font-family:'Liberation Sans';">Nov 2011</div>
<div class="t" style="left:765.21px;top:393px;font-size:10.6px;letter-spacing:0.200px;color:#161616;font-weight:normal;font-family:'Liberation Sans';">Nov 2012</div>
<div class="t" style="left:808.61px;top:379px;font-size:10.6px;letter-spacing:0.200px;color:#161616;font-weight:normal;font-family:'Liberation Sans';">Nov 2013</div>
<div class="t" style="left:851.93px;top:393px;font-size:10.6px;letter-spacing:0.200px;color:#161616;font-weight:normal;font-family:'Liberation Sans';">Dec 2014</div>
<div class="t" style="left:895.41px;top:379px;font-size:10.6px;letter-spacing:0.200px;color:#161616;font-weight:normal;font-family:'Liberation Sans';">Dec 2015</div>
<div class="t" style="left:938.81px;top:393px;font-size:10.6px;letter-spacing:0.200px;color:#161616;font-weight:normal;font-family:'Liberation Sans';">Dec 2016</div>
<div class="t" style="left:982.21px;top:379px;font-size:10.6px;letter-spacing:0.200px;color:#161616;font-weight:normal;font-family:'Liberation Sans';">Dec 2017</div>
<div class="t" style="left:1025.61px;top:393px;font-size:10.6px;letter-spacing:0.200px;color:#161616;font-weight:normal;font-family:'Liberation Sans';">Dec 2018</div>
<div class="t" style="left:1070.14px;top:379px;font-size:10.6px;letter-spacing:0.200px;color:#161616;font-weight:normal;font-family:'Liberation Sans';">Jan 2020</div>
<div class="t" style="left:662.13px;top:438px;font-size:11.09px;letter-spacing:-0.079px;color:#161616;font-weight:normal;font-family:'Liberation Sans';">Body Height</div>
<div class="t" style="left:607.29px;top:459px;font-size:10.9px;letter-spacing:0.000px;color:#161616;font-weight:normal;font-family:'Liberation Sans';">200</div>
<div class="t" style="left:607.29px;top:500px;font-size:10.9px;letter-spacing:0.000px;color:#161616;font-weight:normal;font-family:'Liberation Sans';">150</div>
<div class="t" style="left:607.29px;top:541px;font-size:10.9px;letter-spacing:0.000px;color:#161616;font-weight:normal;font-family:'Liberation Sans';">100</div>
<div class="t" style="left:613.35px;top:581px;font-size:10.9px;letter-spacing:0.000px;color:#161616;font-weight:normal;font-family:'Liberation Sans';">50</div>
<div class="t" style="left:619.41px;top:622px;font-size:10.9px;letter-spacing:0.000px;color:#161616;font-weight:normal;font-family:'Liberation Sans';">0</div>
<div class="t" style="left:634.93px;top:634px;font-size:10.6px;letter-spacing:0.200px;color:#161616;font-weight:normal;font-family:'Liberation Sans';">Nov 2010</div>
<div class="t" style="left:680.02px;top:648px;font-size:10.6px;letter-spacing:0.200px;color:#161616;font-weight:normal;font-family:'Liberation Sans';">Jan 2011</div>
<div class="t" style="left:722.21px;top:634px;font-size:10.6px;letter-spacing:0.200px;color:#161616;font-weight:normal;font-family:'Liberation Sans';">Nov 2011</div>
<div class="t" style="left:765.21px;top:648px;font-size:10.6px;letter-spacing:0.200px;color:#161616;font-weight:normal;font-family:'Liberation Sans';">Nov 2012</div>
<div class="t" style="left:808.61px;top:634px;font-size:10.6px;letter-spacing:0.200px;color:#161616;font-weight:normal;font-family:'Liberation Sans';">Nov 2013</div>
<div class="t" style="left:851.93px;top:648px;font-size:10.6px;letter-spacing:0.200px;color:#161616;font-weight:normal;font-family:'Liberation Sans';">Dec 2014</div>
<div class="t" style="left:895.41px;top:634px;font-size:10.6px;letter-spacing:0.200px;color:#161616;font-weight:normal;font-family:'Liberation Sans';">Dec 2015</div>
<div class="t" style="left:938.81px;top:648px;font-size:10.6px;letter-spacing:0.200px;color:#161616;font-weight:normal;font-family:'Liberation Sans';">Dec 2016</div>
<div class="t" style="left:982.21px;top:634px;font-size:10.6px;letter-spacing:0.200px;color:#161616;font-weight:normal;font-family:'Liberation Sans';">Dec 2017</div>
<div class="t" style="left:1025.61px;top:648px;font-size:10.6px;letter-spacing:0.200px;color:#161616;font-weight:normal;font-family:'Liberation Sans';">Dec 2018</div>
<div class="t" style="left:1070.14px;top:634px;font-size:10.6px;letter-spacing:0.200px;color:#161616;font-weight:normal;font-family:'Liberation Sans';">Jan 2020</div>
<div class="t" style="left:662.13px;top:693px;font-size:11.09px;letter-spacing:0.376px;color:#161616;font-weight:normal;font-family:'Liberation Sans';">BMI</div>
<div class="t" style="left:613.35px;top:714px;font-size:10.9px;letter-spacing:0.000px;color:#161616;font-weight:normal;font-family:'Liberation Sans';">20</div>
<div class="t" style="left:613.52px;top:755px;font-size:10.9px;letter-spacing:0.000px;color:#161616;font-weight:normal;font-family:'Liberation Sans';">15</div>
<div class="t" style="left:613.35px;top:796px;font-size:10.9px;letter-spacing:0.000px;color:#161616;font-weight:normal;font-family:'Liberation Sans';">10</div>
<div class="t" style="left:619.58px;top:836px;font-size:10.9px;letter-spacing:0.000px;color:#161616;font-weight:normal;font-family:'Liberation Sans';">5</div>
<div class="t" style="left:619.41px;top:877px;font-size:10.9px;letter-spacing:0.000px;color:#161616;font-weight:normal;font-family:'Liberation Sans';">0</div>
<div class="t" style="left:634.93px;top:889px;font-size:10.6px;letter-spacing:0.200px;color:#161616;font-weight:normal;font-family:'Liberation Sans';">Nov 2010</div>
<div class="t" style="left:680.02px;top:903px;font-size:10.6px;letter-spacing:0.200px;color:#161616;font-weight:normal;font-family:'Liberation Sans';">Jan 2011</div>
<div class="t" style="left:722.21px;top:889px;font-size:10.6px;letter-spacing:0.200px;color:#161616;font-weight:normal;font-family:'Liberation Sans';">Nov 2011</div>
<div class="t" style="left:765.21px;top:903px;font-size:10.6px;letter-spacing:0.200px;color:#161616;font-weight:normal;font-family:'Liberation Sans';">Nov 2012</div>
<div class="t" style="left:808.61px;top:889px;font-size:10.6px;letter-spacing:0.200px;color:#161616;font-weight:normal;font-family:'Liberation Sans';">Nov 2013</div>
<div class="t" style="left:851.93px;top:903px;font-size:10.6px;letter-spacing:0.200px;color:#161616;font-weight:normal;font-family:'Liberation Sans';">Dec 2014</div>
<div class="t" style="left:895.41px;top:889px;font-size:10.6px;letter-spacing:0.200px;color:#161616;font-weight:normal;font-family:'Liberation Sans';">Dec 2015</div>
<div class="t" style="left:938.81px;top:903px;font-size:10.6px;letter-spacing:0.200px;color:#161616;font-weight:normal;font-family:'Liberation Sans';">Dec 2016</div>
<div class="t" style="left:982.21px;top:889px;font-size:10.6px;letter-spacing:0.200px;color:#161616;font-weight:normal;font-family:'Liberation Sans';">Dec 2017</div>
<div class="t" style="left:1025.61px;top:903px;font-size:10.6px;letter-spacing:0.200px;color:#161616;font-weight:normal;font-family:'Liberation Sans';">Dec 2018</div>
<div class="t" style="left:1070.14px;top:889px;font-size:10.6px;letter-spacing:0.200px;color:#161616;font-weight:normal;font-family:'Liberation Sans';">Jan 2020</div>
<div class="t" style="left:1273.21px;top:165px;font-size:21.19px;letter-spacing:0.697px;color:#202124;font-weight:normal;font-family:'Liberation Sans';">Control</div>
<div class="t" style="left:1375.94px;top:165px;font-size:21.19px;letter-spacing:0.484px;color:#202124;font-weight:normal;font-family:'Liberation Sans';">Input box</div>
<div class="t" style="left:1225.34px;top:228px;font-size:17.35px;letter-spacing:-0.942px;color:#3d6fd4;font-weight:normal;font-family:'Liberation Sans';-webkit-text-stroke:0.3px #3b74dc;">DATA</div>
<div class="t" style="left:1345.16px;top:228px;font-size:17.35px;letter-spacing:-1.223px;color:#616161;font-weight:normal;font-family:'Liberation Sans';-webkit-text-stroke:0.3px #616161;">STYLE</div>
<div class="t" style="left:1191.93px;top:283px;font-size:13.94px;letter-spacing:-0.338px;color:#7b7b7b;font-weight:bold;font-family:'Liberation Sans';">Data source</div>
<div class="t" style="left:1232.98px;top:316px;font-size:14.36px;letter-spacing:-0.239px;color:#202124;font-weight:normal;font-family:'Liberation Sans';">FHIR Patient 1223</div>
<div class="t" style="left:1227.90px;top:351px;font-size:14.08px;letter-spacing:-0.477px;color:#3c70d8;font-weight:normal;font-family:'Liberation Sans';">BLEND DATA</div>
<div class="t" style="left:1192.36px;top:407px;font-size:13.94px;letter-spacing:-0.296px;color:#7b7b7b;font-weight:bold;font-family:'Liberation Sans';">Control field</div>
<div class="t" style="left:1232.94px;top:440px;font-size:14.79px;letter-spacing:-0.446px;color:#202124;font-weight:normal;font-family:'Liberation Sans';">Resource Id</div>
<div class="t" style="left:1398.67px;top:282px;font-size:14.65px;letter-spacing:-0.664px;color:#7b7b7b;font-weight:bold;font-family:'Liberation Sans';">Available Fields</div>
<div class="t" style="left:1440.06px;top:315px;font-size:15.08px;letter-spacing:0.167px;color:#757575;font-weight:normal;font-family:'Liberation Sans';">Type to search</div>
<div class="t" style="left:1439.34px;top:356px;font-size:14.79px;letter-spacing:-0.051px;color:#202124;font-weight:normal;font-family:'Liberation Sans';">BMI</div>
<div class="t" style="left:1439.34px;top:384px;font-size:14.79px;letter-spacing:-0.367px;color:#202124;font-weight:normal;font-family:'Liberation Sans';">Body Height</div>
<div class="t" style="left:1439.34px;top:413px;font-size:14.79px;letter-spacing:-0.438px;color:#202124;font-weight:normal;font-family:'Liberation Sans';">Body Weight</div>
<div class="t" style="left:1439.81px;top:441px;font-size:14.79px;letter-spacing:-0.260px;color:#202124;font-weight:normal;font-family:'Liberation Sans';">Claim</div>
<div class="t" style="left:1439.81px;top:470px;font-size:14.79px;letter-spacing:-0.481px;color:#202124;font-weight:normal;font-family:'Liberation Sans';">Count</div>
<div class="t" style="left:1439.34px;top:498px;font-size:14.79px;letter-spacing:-0.289px;color:#202124;font-weight:normal;font-family:'Liberation Sans';">Date Time</div>
<div class="t" style="left:1439.34px;top:526px;font-size:14.79px;letter-spacing:-0.449px;color:#202124;font-weight:normal;font-family:'Liberation Sans';">Resource</div>
<div class="t" style="left:1439.34px;top:555px;font-size:14.79px;letter-spacing:-0.436px;color:#202124;font-weight:normal;font-family:'Liberation Sans';">Resource Id</div>
</div>
</body></html>
